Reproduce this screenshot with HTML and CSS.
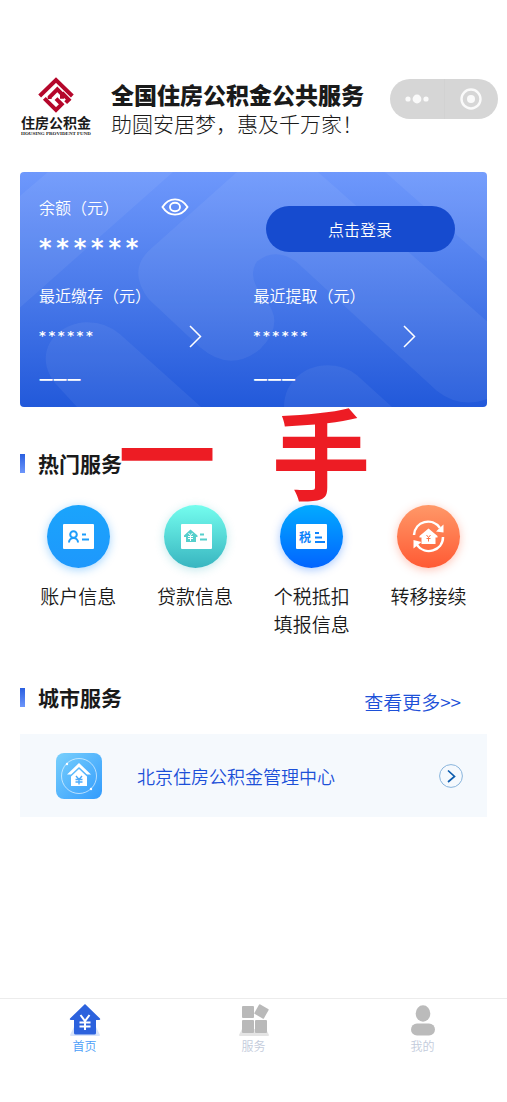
FILE: index.html
```html
<!DOCTYPE html>
<html lang="zh-CN">
<head>
  <meta charset="utf-8">
  <meta name="viewport" content="width=device-width, initial-scale=1">
  <title>全国住房公积金公共服务</title>
  <link rel="stylesheet" href="styles.css">
</head>
<body>
  <header class="header">
    <div class="logo">
      <svg width="36" height="36" viewBox="0 0 108 108" fill="none" stroke="#b5072b" stroke-width="12">
        <path d="M5 57 54 9l49 48"/>
        <path d="M19 64l35 35 17-17-17-17"/>
        <path d="M35 66V60l23-23 14 14v14"/>
        <path d="M72 48l20 20-9 9"/>
      </svg>
      <strong class="logo-name">住房公积金</strong>
      <span class="logo-en">HOUSING PROVIDENT FUND</span>
    </div>
    <div class="slogan">
      <h1>全国住房公积金公共服务</h1>
      <p>助圆安居梦，惠及千万家！</p>
    </div>
    <div class="capsule">
      <button type="button" aria-label="更多">
        <svg width="24" height="12" viewBox="0 0 24 12" fill="#fafafa"><circle cx="3" cy="6" r="2.6"/><circle cx="12" cy="6" r="4.4"/><circle cx="21" cy="6" r="2.6"/></svg>
      </button>
      <button type="button" aria-label="关闭">
        <svg width="22" height="22" viewBox="0 0 22 22"><circle cx="11" cy="11" r="9.5" fill="none" stroke="#fafafa" stroke-width="2.4"/><circle cx="11" cy="11" r="4" fill="#fafafa"/></svg>
      </button>
    </div>
  </header>

  <main class="main">
    <!-- Balance card -->
    <section class="card">
      <svg class="card-bg" viewBox="0 0 467 236" preserveAspectRatio="none" fill="#fff" fill-opacity=".06">
        <path d="M28 0 0 24V136L153 0Z"/>
        <path d="M217 0 132 76Q106 98 129 128L180 176Q210 202 240 178 266 152 245 128 226 105 237 90 255 75 276 90L417 220Q440 238 467 228V150L298 0Z"/>
        <path d="M365 0 467 90V0Z"/>
        <path d="M57 236 35 212C12 183 35 151 68 151Q86 151 100 163L181 236Z"/>
        <path d="M264 236C264 210 285 194 307 194Q325 194 337 204L372 236Z"/>
      </svg>
      <div class="card-grid">
        <div class="cell">
          <div class="cell-label">余额（元）
            <button class="eye" type="button" aria-label="显示余额">
              <svg width="28" height="18" viewBox="0 0 28 18" fill="none" stroke="#fff" stroke-width="1.9"><path d="M1.500 9C8-1.200 20-1.200 26.500 9 20 19.200 8 19.200 1.500 9Z"/><ellipse cx="14" cy="9" rx="5" ry="4.200"/></svg>
            </button>
          </div>
          <div class="stars stars-big">*&thinsp;*&thinsp;*&thinsp;*&thinsp;*&thinsp;*</div>
        </div>
        <div class="cell">
          <button class="login" type="button">点击登录</button>
        </div>
        <div class="cell">
          <div class="cell-label">最近缴存（元）</div>
          <a class="cell-link" href="#" aria-label="缴存明细">
            <span class="stars">*&thinsp;*&thinsp;*&thinsp;*&thinsp;*&thinsp;*</span>
            <svg width="14" height="24" viewBox="0 0 14 24" fill="none" stroke="#fff" stroke-width="1.500"><path d="M2 2 12.500 12.500 2 23"/></svg>
          </a>
          <div class="dashes">一一一</div>
        </div>
        <div class="cell">
          <div class="cell-label">最近提取（元）</div>
          <a class="cell-link" href="#" aria-label="提取明细">
            <span class="stars">*&thinsp;*&thinsp;*&thinsp;*&thinsp;*&thinsp;*</span>
            <svg width="14" height="24" viewBox="0 0 14 24" fill="none" stroke="#fff" stroke-width="1.500"><path d="M2 2 12.500 12.500 2 23"/></svg>
          </a>
          <div class="dashes">一一一</div>
        </div>
      </div>
      <div class="mark"><span>一</span><span>手</span></div>
    </section>

    <!-- Hot services -->
    <section class="hot">
      <h2>热门服务</h2>
      <nav class="services">
        <a href="#">
          <span class="ball ball-account">
            <svg width="63" height="63" viewBox="0 0 63 63"><rect x="16" y="19" width="31" height="25" rx="1" fill="#fff"/><g fill="none" stroke="#1d9dfb" stroke-width="2"><circle cx="26.500" cy="29.500" r="3.300"/><path d="M22 37.500c0-6 9-6 9 0M35 29.500h4M35 34.500h7"/></g></svg>
          </span>
          账户信息
        </a>
        <a href="#">
          <span class="ball ball-loan">
            <svg width="63" height="63" viewBox="0 0 63 63"><rect x="17" y="19" width="31" height="25" rx="1" fill="#fff"/><path d="M26.500 24.500 20 30.500v1.500h2v5h10v-5h1.500v-1.500Z" fill="#55cfcc"/><path d="M24.500 28l2 2.500 2-2.500M26.500 30.500V36M24 31.500h5M24 33.500h5" fill="none" stroke="#fff"/><path d="M36 29.500h4M36 34.500h7" stroke="#55cfcc" stroke-width="2"/></svg>
          </span>
          贷款信息
        </a>
        <a href="#">
          <span class="ball ball-tax">
            <svg width="63" height="63" viewBox="0 0 63 63"><rect x="16" y="19" width="31" height="25" rx="1" fill="#fff"/><text x="19" y="37" font-size="12" font-weight="700" fill="#0d83fb">税</text><path d="M35 28h4M35 32.500h7M35 37h10" stroke="#0d83fb" stroke-width="1.800"/></svg>
          </span>
          个税抵扣<br>填报信息
        </a>
        <a href="#">
          <span class="ball ball-move">
            <svg width="63" height="63" viewBox="0 0 63 63"><g fill="none" stroke="#fff" stroke-width="2.500"><path d="M17 30C18 16 35 12 43 23"/><path d="M46 32C46 46 28 51 20 40"/></g><path d="M46.500 19.500v8l-7.500-1ZM16.500 43.500v-8.500l8 2Z" fill="#fff"/><path d="M31.500 23.500 22.500 31v1.500h2V39h14v-6.500h2V31Z" fill="#fff"/><path d="M29.500 30l2 2.500 2-2.500M31.500 32.500V36.500M29.500 33.500h4" fill="none" stroke="#ff7448"/></svg>
          </span>
          转移接续
        </a>
      </nav>
    </section>

    <!-- City services -->
    <section class="city">
      <div class="city-head">
        <h2>城市服务</h2>
        <a class="more" href="#">查看更多&gt;&gt;</a>
      </div>
      <a class="city-row" href="#">
        <svg width="46" height="46" viewBox="0 0 46 46">
          <defs><linearGradient id="city" x1="0" y1="0" x2="1" y2="1"><stop stop-color="#79d0fc"/><stop offset="1" stop-color="#329bfd"/></linearGradient></defs>
          <rect width="46" height="46" rx="8" fill="url(#city)"/>
          <circle cx="23" cy="23" r="17.500" fill="none" stroke="#fff" stroke-opacity=".75" stroke-width=".8"/>
          <circle cx="11" cy="11" r="1.200" fill="#fff"/><circle cx="35" cy="36" r="1.200" fill="#fff"/>
          <path d="M23 10 11 21.500h4L23 14l8 7.500h4Z" fill="#fff"/>
          <path d="M23 16l-8 7.500V33h16v-9.500Z" fill="#fff"/>
          <path d="M20 23l3 3.500 3-3.500M23 26.500V31.500M19.500 26.500h7M19.500 29h7" fill="none" stroke="#4aaafb" stroke-width="1.400"/>
        </svg>
        <span class="city-name">北京住房公积金管理中心</span>
        <svg width="24" height="24" viewBox="0 0 24 24" fill="none"><circle cx="12" cy="12" r="11.400" stroke="#88b4dc"/><path d="M9 6.500 15.500 12.500 9 18" stroke="#0c5cae" stroke-width="1.700"/></svg>
      </a>
    </section>
  </main>

  <nav class="tabbar">
    <a class="active" href="#">
      <svg width="32" height="34" viewBox="0 0 32 34"><path d="M5 24h22l4 8q0 1-1 1H2q-1 0-1-1Z" fill="#d7e4fb"/><path d="M16 1 1 15.500q-.8 1.500 1 1.500h3V30q0 1.500 1.500 1.500h19Q27 31.500 27 30V17h3q1.800 0 1-1.500Z" fill="#2c62dd"/><path d="M11.500 12l4.500 6 4.500-6M16 18v9M10.500 19.500h11M10.500 23.500h11" fill="none" stroke="#fff" stroke-width="2"/></svg>
      首页
    </a>
    <a href="#">
      <svg width="32" height="34" viewBox="0 0 32 34"><path d="M4 26h24l3 6q0 1-1 1H2q-1 0-1-1Z" fill="#e4e4e4"/><g fill="#b9b9b9"><rect x="4" y="3" width="12" height="12" rx="1"/><rect x="4" y="17" width="12" height="13" rx="1"/><rect x="17" y="17" width="12" height="13" rx="1"/><rect x="18" y="3" width="11" height="11" rx="1" transform="rotate(30 23.500 8.500)"/></g></svg>
      服务
    </a>
    <a href="#">
      <svg width="32" height="34" viewBox="0 0 32 34" fill="#bbb"><ellipse cx="16" cy="10.500" rx="7.300" ry="8.200"/><rect x="4" y="20.500" width="24" height="12" rx="6"/></svg>
      我的
    </a>
  </nav>
</body>
</html>
```

FILE: styles.css
```css
* { box-sizing: border-box; }
body {
  margin: 0;
  min-height: 100vh;
  display: flex;
  flex-direction: column;
  background: #fff;
  color: #1a1a1a;
  font-family: 'Noto Sans CJK SC', sans-serif;
  font-size: 16px;
  font-weight: 350;
}
h1, h2, p { margin: 0; }
a { color: inherit; text-decoration: none; }
button {
  padding: 0;
  border: 0;
  background: none;
  color: inherit;
  font: inherit;
  cursor: pointer;
}
svg { display: block; flex: none; }

/* --- Header --- */
.header {
  display: flex;
  align-items: flex-start;
  padding: 77px 9px 0 20px;
}
.logo {
  width: 72px;
  display: flex;
  flex-direction: column;
  align-items: center;
  white-space: nowrap;
}
.logo-name { font-size: 14px; line-height: 18px; }
.logo-en {
  font-family: 'Liberation Serif', serif;
  font-size: 5px;
  line-height: 5px;
  font-weight: bold;
}
.slogan { margin-left: 19px; white-space: nowrap; }
.slogan h1 { font-size: 23px; line-height: 34px; font-weight: 900; }
.slogan p { font-size: 21px; line-height: 24px; font-weight: 300; }
.capsule {
  width: 108px;
  height: 40px;
  margin: 2px 0 0 auto;
  display: flex;
  border-radius: 20px;
  background: #d6d6d6;
}
.capsule button {
  flex: 1;
  display: flex;
  align-items: center;
  justify-content: center;
}
.capsule button + button { border-left: 1px solid #d2d2d2; }

.main { flex: 1; padding: 0 20px; }

/* --- Balance card --- */
.card {
  position: relative;
  margin-top: 36px;
  border-radius: 4px;
  background: linear-gradient(#6e98fc, #4a7aea 50%, #2259da);
  color: #fff;
}
.card-bg {
  position: absolute;
  inset: 0;
  width: 100%;
  height: 100%;
}
.card-grid {
  position: relative;
  display: grid;
  grid-template-columns: 1fr 1fr;
  row-gap: 18px;
  padding: 23px 19px 16px;
}
.cell-label { display: flex; align-items: center; line-height: 24px; }
.eye { margin-left: 42px; }
.stars {
  font-family: 'DejaVu Sans', sans-serif;
  font-size: 13px;
  line-height: 24px;
  font-weight: bold;
}
.stars-big { margin-top: 12px; font-size: 24px; line-height: 34px; }
.login {
  width: 189px;
  height: 46px;
  margin: 11px 0 0 12px;
  border-radius: 23px;
  background: #164bcf;
}
.cell-link {
  display: flex;
  align-items: center;
  justify-content: space-between;
  margin-top: 17px;
  padding-right: 52px;
}
.dashes { margin-top: 19px; font-size: 14px; line-height: 24px; font-weight: bold; }

/* Big red characters lying over the card's lower edge */
.mark {
  position: absolute;
  top: 100%;
  left: 98px;
  display: flex;
  gap: 56px;
  color: #ed1c24;
  font-size: 98px;
  line-height: 84px;
  font-weight: bold;
  pointer-events: none;
}

/* --- Sections --- */
h2 {
  display: flex;
  align-items: center;
  gap: 13px;
  font-size: 21px;
  line-height: 28px;
  font-weight: 700;
}
h2::before {
  content: '';
  width: 5px;
  height: 19px;
  background: linear-gradient(#2a5fe0, #6d96fb);
}
.hot { margin-top: 42px; }
.services {
  display: grid;
  grid-template-columns: repeat(4, 1fr);
  margin-top: 28px;
}
.services a {
  display: flex;
  flex-direction: column;
  align-items: center;
  font-size: 19px;
  line-height: 28px;
}
.ball { margin-bottom: 14px; border-radius: 50%; }
.ball-account { background: linear-gradient(#1aa4fc, #1e98fc); box-shadow: 0 2px 10px #1e98fc66; }
.ball-loan { background: linear-gradient(#74fdee, #38b5c0); box-shadow: 0 2px 10px #38b5c04d; }
.ball-tax { background: linear-gradient(#02abff, #0264ff); box-shadow: 0 2px 10px #0264ff59; }
.ball-move { background: linear-gradient(#ff9868, #ff5a34); box-shadow: 0 2px 10px #ff5a3459; }

.city { margin-top: 45px; }
.city-head {
  display: flex;
  align-items: flex-end;
  justify-content: space-between;
  padding-right: 26px;
}
.more { color: #1c50d8; font-size: 19px; line-height: 18px; }
.city-row {
  display: flex;
  align-items: center;
  margin-top: 23px;
  padding: 19px 24px 18px 36px;
  background: #f5f9fd;
  color: #1c50d8;
}
.city-name { flex: 1; margin-left: 35px; font-size: 18px; }

/* --- Bottom tabs --- */
.tabbar {
  display: grid;
  grid-template-columns: repeat(3, 1fr);
  height: 104px;
  padding-top: 4px;
  border-top: 1px solid #ececec;
}
.tabbar a {
  display: flex;
  flex-direction: column;
  align-items: center;
  color: #c3cbdb;
  font-size: 12px;
  line-height: 18px;
}
.tabbar .active { color: #4a9df8; }
```
